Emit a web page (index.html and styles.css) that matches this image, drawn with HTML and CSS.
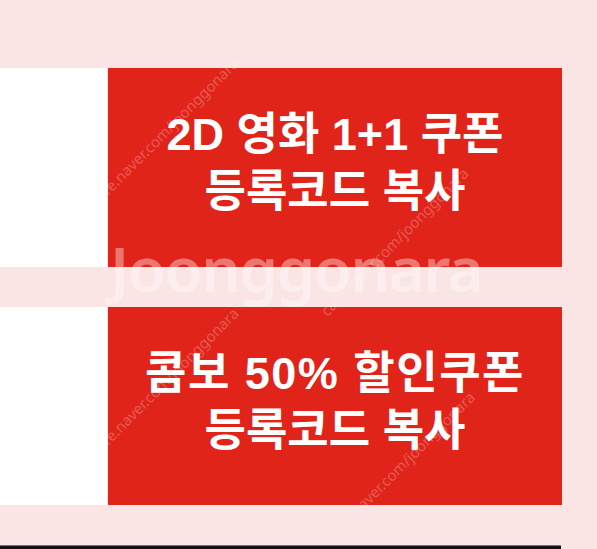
FILE: index.html
```html
<!DOCTYPE html>
<html lang="ko">
<head>
<meta charset="utf-8">
<link rel="stylesheet" href="styles.css">
</head>
<body>
<div class="page">
  <div class="row">
    <div class="side"></div>
    <div class="card"><p>2D 영화 1+1 쿠폰</p><p>등록코드 복사</p></div>
  </div>
  <div class="row">
    <div class="side"></div>
    <div class="card"><p class="wide">콤보 50% 할인쿠폰</p><p>등록코드 복사</p></div>
  </div>
  <div class="bottom"></div>

  <div class="wm-big">Joonggonara</div>
  <div class="wm wm1">cafe.naver.com/joonggonara</div>
  <div class="wm wm2">cafe.naver.com/joonggonara</div>
  <div class="wm wm3">cafe.naver.com/joonggonara</div>
  <div class="wm wm4">naver.com/joonggonara</div>
</div>
</body>
</html>
```
FILE: styles.css
```css
html, body {
  margin: 0;
  padding: 0;
  background: #fae4e4;
}
.page {
  position: relative;
  width: 597px;
  height: 549px;
  overflow: hidden;
  padding-top: 68px;
  box-sizing: border-box;
  display: flex;
  flex-direction: column;
  gap: 40px;
}
.row {
  display: flex;
  height: 199px;
  gap: 1px;
}
.side {
  width: 107px;
  background: #ffffff;
}
.card {
  width: 454px;
  background: #e0241a;
  display: flex;
  flex-direction: column;
  align-items: center;
  justify-content: center;
  padding-bottom: 8px;
  box-sizing: border-box;
  color: #ffffff;
  font-family: "Liberation Sans", "Noto Sans CJK KR", sans-serif;
  font-weight: 700;
  font-size: 45px;
  line-height: 57px;
}
.card p {
  margin: 0;
}
.card .wide {
  letter-spacing: 1.5px;
}
.bottom {
  width: 561px;
  height: 3px;
  background: #111111;
  border-top: 1px solid #777;
}
.wm-big {
  position: absolute;
  left: 110px;
  top: 226px;
  font-family: "Noto Sans", sans-serif;
  font-weight: 600;
  font-size: 62px;
  letter-spacing: -1.5px;
  color: rgba(255, 255, 255, 0.38);
}
.wm {
  position: absolute;
  font-family: "Noto Sans", sans-serif;
  font-size: 15px;
  color: rgba(255, 255, 255, 0.25);
  transform: rotate(-45deg);
  transform-origin: left bottom;
  white-space: nowrap;
}
.wm1 { left: 100px; top: 190px; }
.wm2 { left: 330px; top: 300px; }
.wm3 { left: 100px; top: 440px; }
.wm4 { left: 360px; top: 500px; }
```
